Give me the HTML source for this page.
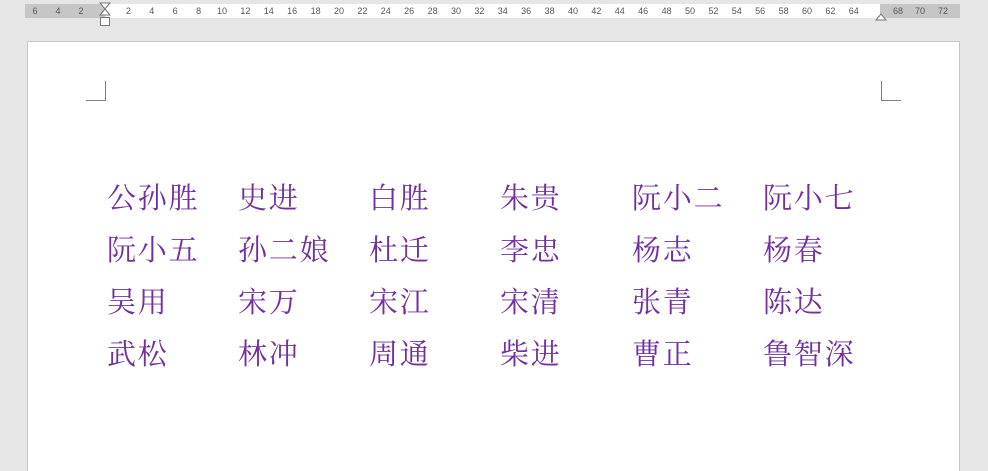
<!DOCTYPE html>
<html><head><meta charset="utf-8"><style>
html,body{margin:0;padding:0;width:988px;height:471px;overflow:hidden;}
body{background:#e6e6e6;position:relative;font-family:"Liberation Sans",sans-serif;}
.rg{position:absolute;top:4px;height:14px;background:#c6c6c6;}
.rw{position:absolute;top:4px;height:14px;background:#fff;left:105px;width:775px;}
.n{position:absolute;top:5px;font-size:9px;color:#555;transform:translateX(-50%);line-height:12px;}
.page{position:absolute;left:27px;top:41px;width:933px;height:430px;background:#fff;border:1px solid #c8c8c8;border-bottom:none;box-sizing:border-box;}
.t{position:absolute;font-family:"Liberation Serif","Noto Serif CJK SC",serif;font-size:29px;color:#7030a0;line-height:1;white-space:nowrap;letter-spacing:1.8px;}
.l{position:absolute;background:#808080;}
</style></head><body>
<div class="rg" style="left:25px;width:80px"></div>
<div class="rw"></div>
<div class="rg" style="left:880px;width:80px"></div>
<div id="nums"></div>
<script>
var h='';[[35,6],[58,4],[81,2]].forEach(function(a){h+='<div class="n" style="left:'+a[0]+'px">'+a[1]+'</div>'});
for(var i=2;i<=64;i+=2){var x=105+i/2*23.4;h+='<div class="n" style="left:'+x.toFixed(1)+'px">'+i+'</div>';}
[[898,68],[920,70],[943,72]].forEach(function(a){h+='<div class="n" style="left:'+a[0]+'px">'+a[1]+'</div>'});
document.getElementById('nums').innerHTML=h;
</script>
<svg style="position:absolute;left:98px;top:2px" width="16" height="26"><path d="M2 1H12L7 7Z M7 7L2 13H12Z" fill="#fff" stroke="#777"/><rect x="2.5" y="15.5" width="9" height="8" fill="#fff" stroke="#777"/></svg>
<svg style="position:absolute;left:874px;top:12px" width="14" height="10"><path d="M2 8L7 2L12 8Z" fill="#fff" stroke="#777"/></svg>
<div class="page"></div>
<div class="l" style="left:105px;top:81px;width:1px;height:20px"></div>
<div class="l" style="left:86px;top:100px;width:20px;height:1px"></div>
<div class="l" style="left:881px;top:81px;width:1px;height:20px"></div>
<div class="l" style="left:881px;top:100px;width:20px;height:1px"></div>
<div id="txt"></div>
<script>
var rows=[["公孙胜","史进","白胜","朱贵","阮小二","阮小七"],["阮小五","孙二娘","杜迁","李忠","杨志","杨春"],["吴用","宋万","宋江","宋清","张青","陈达"],["武松","林冲","周通","柴进","曹正","鲁智深"]];
var xs=[107,238,369,500,632,763],ys=[185,237,289,341],s='';
rows.forEach(function(r,i){r.forEach(function(w,j){s+='<div class="t" style="left:'+xs[j]+'px;top:'+ys[i]+'px">'+w+'</div>';});});
document.getElementById('txt').innerHTML=s;
</script>
</body></html>
